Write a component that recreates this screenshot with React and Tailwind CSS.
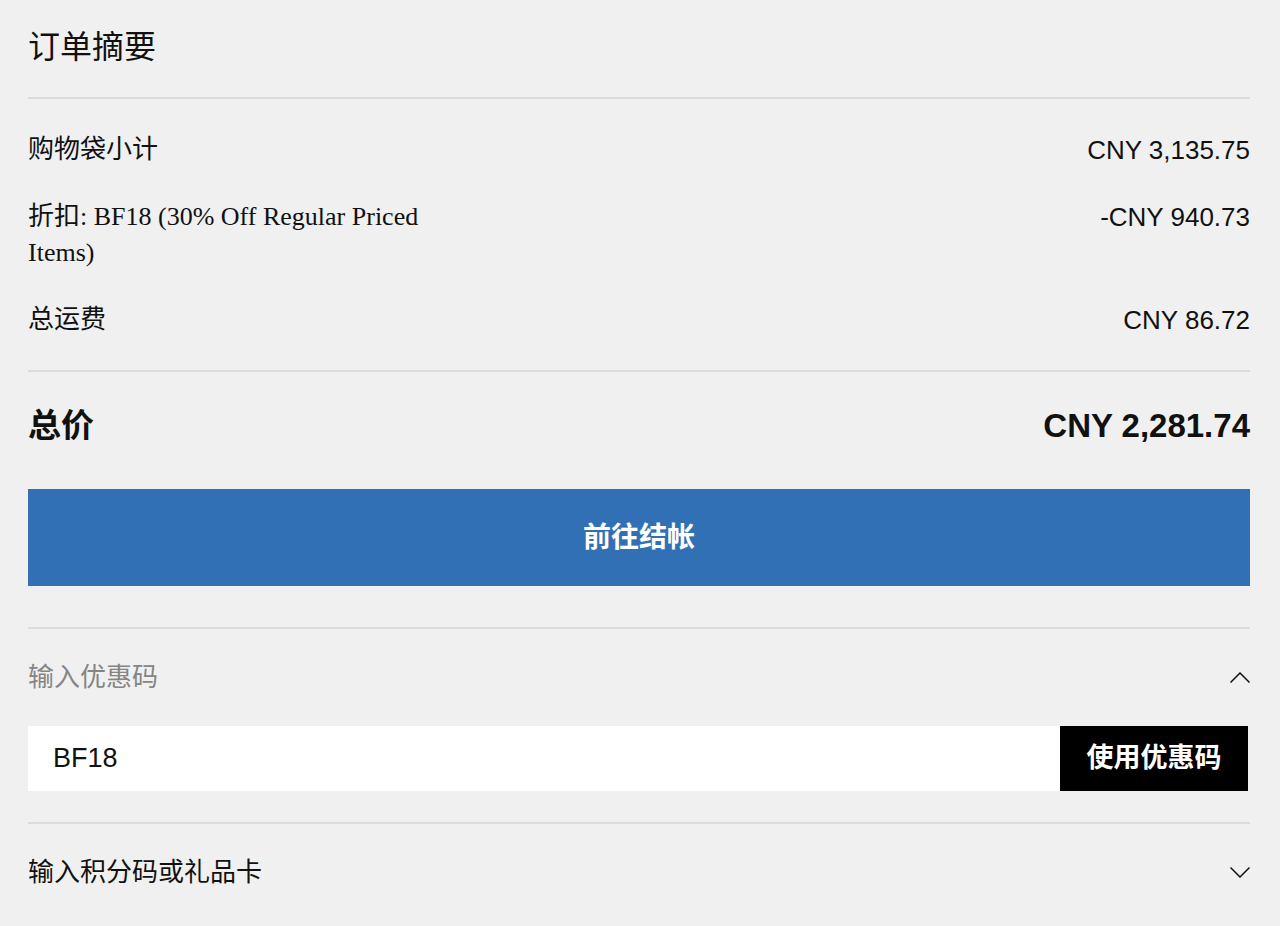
const serif = { fontFamily: '"Liberation Serif", "Noto Sans CJK SC", serif' }
const sans = { fontFamily: '"Liberation Sans", "Noto Sans CJK SC", sans-serif' }

function Chevron({ up }) {
  return (
    <svg width="20" height="11" viewBox="0 0 20 11" fill="none" stroke="#111" strokeWidth="1.5">
      {up ? <polyline points="0.5,10.5 10,1 19.5,10.5" /> : <polyline points="0.5,0.5 10,10 19.5,0.5" />}
    </svg>
  )
}

function Row({ label, value, wide }) {
  return (
    <div className="flex justify-between items-start text-[26px] leading-[36px] text-[#111]">
      <div className={wide ? 'w-[430px]' : ''} style={serif}>
        {label}
      </div>
      <div className="text-[26px]" style={sans}>
        {value}
      </div>
    </div>
  )
}

export default function App() {
  return (
    <div className="min-h-[926px] bg-[#f0f0f0] pl-[28px] pr-[30px]">
      {/* Title */}
      <h1 className="pt-[23px] pb-[26px] text-[32px] leading-[48px] text-[#111]" style={serif}>
        订单摘要
      </h1>
      <div className="h-[2px] bg-[#dcdcdc]" />

      {/* Line items */}
      <div className="flex flex-col gap-[31px] pt-[33px] pb-[32px]">
        <Row label="购物袋小计" value="CNY 3,135.75" />
        <Row label="折扣: BF18 (30% Off Regular Priced Items)" value="-CNY 940.73" wide />
        <Row label="总运费" value="CNY 86.72" />
      </div>
      <div className="h-[2px] bg-[#dcdcdc]" />

      {/* Total */}
      <div className="flex justify-between items-center pt-[29px] h-[78px] font-bold text-[#111]" style={sans}>
        <span className="text-[33px]">总价</span>
        <span className="text-[33px]">CNY 2,281.74</span>
      </div>

      <button
        className="mt-[39px] w-full h-[97px] bg-[#3170b5] text-white text-[28px] font-bold"
        style={sans}
      >
        前往结帐
      </button>

      <div className="mt-[41px] h-[2px] bg-[#dcdcdc]" />

      {/* Promo code */}
      <div className="flex justify-between items-center h-[97px]">
        <span className="text-[26px] text-[#858585]" style={serif}>
          输入优惠码
        </span>
        <Chevron up />
      </div>
      <div className="flex h-[65px] pr-[2px]">
        <div className="flex-1 bg-white flex items-center pl-[25px] text-[27px] text-[#111]" style={sans}>
          BF18
        </div>
        <button className="w-[188px] bg-black text-white text-[27px] font-bold" style={sans}>
          使用优惠码
        </button>
      </div>

      <div className="mt-[31px] h-[2px] bg-[#dcdcdc]" />

      {/* Gift card */}
      <div className="flex justify-between items-center h-[97px]">
        <span className="text-[26px] text-[#111]" style={serif}>
          输入积分码或礼品卡
        </span>
        <Chevron />
      </div>
    </div>
  )
}
